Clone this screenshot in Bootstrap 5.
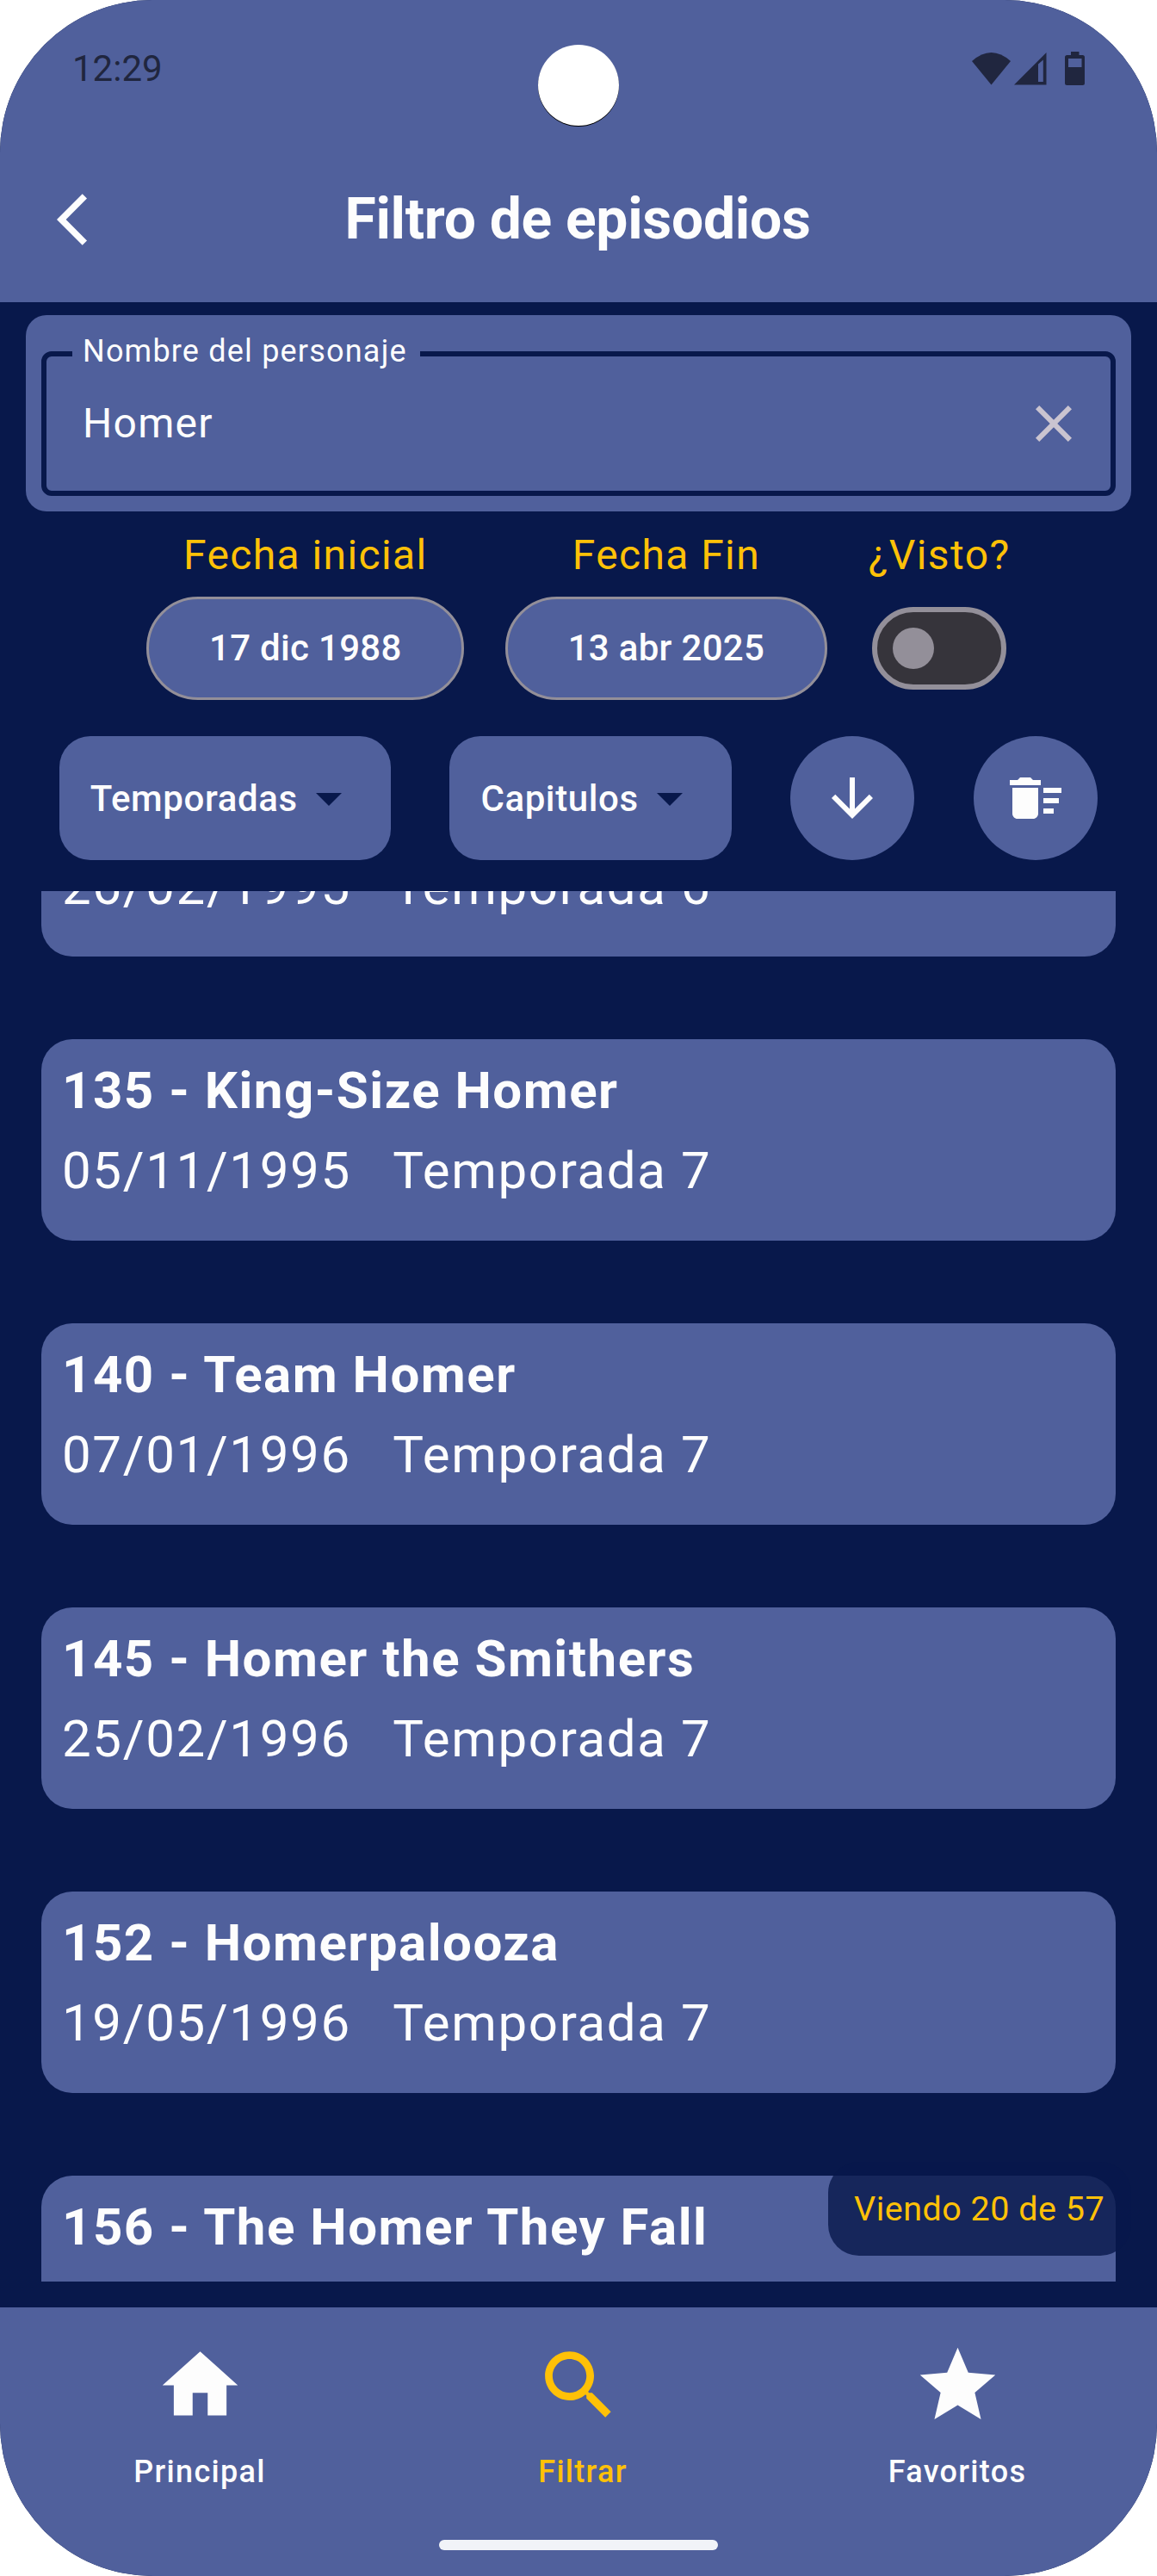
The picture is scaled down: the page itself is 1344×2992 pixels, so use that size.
<!DOCTYPE html>
<html lang="es">
<head>
<meta charset="utf-8">
<meta name="viewport" content="width=device-width, initial-scale=1">
<title>Filtro de episodios</title>
<link href="https://cdn.jsdelivr.net/npm/bootstrap@5.3.0/dist/css/bootstrap.min.css" rel="stylesheet">
<style>
:root{--panel:#50609c;--night:#08184b;--gold:#ffc107;--ink:#20263f}
body{background:#fff;font-family:Roboto,"Noto Sans",sans-serif;color:#fdfdfd}
svg{display:block;fill:currentColor;flex:none}
.phone{width:1344px;height:2992px;background:var(--night);border-radius:177px;overflow:hidden}
.top-bar{height:351px;background:var(--panel)}
.status{height:159px;padding:0 82px 0 84px;color:var(--ink);font-size:42px}
.camera{left:625px;top:52px;width:94px;height:94px;background:#fff;box-shadow:0 1px 0 #000}
.title-row{height:192px;padding:0 66px}
.title-row h1{font-size:66px;font-weight:700;line-height:78px;letter-spacing:-.3px;margin-right:74px}
.search-box{margin:15px 30px 0;height:228px;border-radius:24px;background:var(--panel);padding:18px}
.outline{height:192px;margin:0;padding:0 36px 0 44px;border:0;position:relative}
.outline::before{content:"";position:absolute;left:0;right:0;top:24px;bottom:0;border:6px solid var(--night);border-radius:12px}
.outline label{position:relative;margin-left:-8px;padding:0 15px 0 12px;background:var(--panel);font-size:36px;line-height:48px;letter-spacing:1.2px;white-space:nowrap}
.outline .value{position:relative;height:120px;font-size:48px;letter-spacing:1.3px;padding-left:4px}
.outline svg{color:#cac4d0}
.dates{gap:48px;margin-top:15px}
.dates .cap{font-size:48px;letter-spacing:1.4px;line-height:72px;margin-bottom:12px;color:var(--gold)}
.date-btn{height:120px;padding:0 69.500px;border:3px solid #938f99;border-radius:60px;background:var(--panel);color:#fdfdfd;font-size:42px;font-weight:500;letter-spacing:.3px;line-height:114px}
.toggle{width:156px;height:96px;margin-top:12px;border:6px solid #938f99;border-radius:48px;background:#36343b;padding-left:18px}
.toggle span{width:48px;height:48px;border-radius:50%;background:#938f99}
.filters{margin-top:42px}
.chip{height:144px;padding:0 36px;border-radius:36px;background:var(--panel);font-size:42px;font-weight:500;letter-spacing:.6px}
.chip svg{color:var(--night)}
.fab{width:144px;height:144px;border-radius:50%;background:var(--panel)}
.list-view{margin:36px 48px 0;height:1615px}
.list-scroll{margin-top:-158px;gap:96px}
.episode{height:234px;flex:none;border-radius:36px;background:var(--panel);padding:20px 24px;font-size:60px;line-height:105px;letter-spacing:1.65px;white-space:pre}
.episode h2{font-size:60px;font-weight:700;line-height:80px;letter-spacing:1.5px;margin:0}
.counter{left:962px;top:2511px;width:352px;height:109px;border-radius:36px;background:rgba(8,24,75,.8);color:var(--gold);font-size:39.500px;line-height:110px;padding-left:30px;letter-spacing:.5px;white-space:nowrap}
.bottom-nav{margin-top:30px;height:312px;background:var(--panel);padding:38px 12px 0}
.tab{font-size:36px;font-weight:500;letter-spacing:1.3px;line-height:48px;gap:24px;color:#fdfdfd}
.tab.active{color:var(--gold)}
.tab.active span{padding-left:10px}
.handle{left:510px;top:2950px;width:324px;height:12px;border-radius:6px;background:#f1f3f8}
</style>
</head>
<body>
<main class="phone position-relative">
  <header class="top-bar">
    <div class="status d-flex align-items-center justify-content-between">
      <span>12:29</span>
      <svg width="134" height="42" viewBox="1128 58 134 42">
        <path d="M1129 70Q1151.500 50 1174 70L1151.500 97.500Z"/>
        <path fill-rule="evenodd" d="M1178 97.500 1215.500 60V97.500ZM1206 73.500V94H1211.800V68.500Z"/>
        <path fill-rule="evenodd" d="M1244 59h9.500v4h4q2.500 0 2.500 2.500v30q0 2.500-2.500 2.500h-18q-2.500 0-2.500-2.500v-30q0-2.500 2.500-2.500h4.500zM1241 67v10h15.500V67z"/>
      </svg>
    </div>
    <div class="title-row d-flex align-items-center">
      <svg width="72" height="72" viewBox="0 0 24 24"><path d="M11.670 3.870 9.900 2.100 0 12l9.900 9.900 1.770-1.770L3.540 12z"/></svg>
      <h1 class="flex-grow-1 text-center mb-0">Filtro de episodios</h1>
    </div>
  </header>
  <div class="camera position-absolute rounded-circle"></div>

  <section class="search-box">
    <div class="outline">
      <label>Nombre del personaje</label>
      <div class="value d-flex align-items-center justify-content-between">
        <span>Homer</span>
        <svg width="72" height="72" viewBox="0 0 24 24"><path d="M19 6.410 17.590 5 12 10.590 6.410 5 5 6.410 10.590 12 5 17.590 6.410 19 12 13.410 17.590 19 19 17.590 13.410 12z"/></svg>
      </div>
    </div>
  </section>

  <section class="dates d-flex justify-content-center">
    <div class="text-center"><div class="cap">Fecha inicial</div><button class="date-btn">17 dic 1988</button></div>
    <div class="text-center"><div class="cap">Fecha Fin</div><button class="date-btn">13 abr 2025</button></div>
    <div class="d-flex flex-column align-items-center"><div class="cap">¿Visto?</div><div class="toggle d-flex align-items-center"><span></span></div></div>
  </section>

  <section class="filters d-flex justify-content-evenly">
    <div class="chip d-flex align-items-center">Temporadas<svg width="72" height="72" viewBox="0 0 24 24"><path d="m7 10 5 5 5-5z"/></svg></div>
    <div class="chip d-flex align-items-center">Capitulos<svg width="72" height="72" viewBox="0 0 24 24"><path d="m7 10 5 5 5-5z"/></svg></div>
    <div class="fab d-flex align-items-center justify-content-center"><svg width="72" height="72" viewBox="0 0 24 24"><path d="m20 12-1.410-1.410L13 16.170V4h-2v12.170l-5.580-5.590L4 12l8 8 8-8z"/></svg></div>
    <div class="fab d-flex align-items-center justify-content-center"><svg width="72" height="72" viewBox="0 0 24 24"><path d="M15 16h4v2h-4zm0-8h7v2h-7zm0 4h6v2h-6zM3 18c0 1.100.9 2 2 2h6c1.100 0 2-.9 2-2V8H3v10zM14 5h-3l-1-1H6L5 5H2v2h12z"/></svg></div>
  </section>

  <section class="list-view overflow-hidden">
    <div class="list-scroll d-flex flex-column">
      <article class="episode"><h2>&nbsp;</h2>26/02/1995   Temporada 6</article>
      <article class="episode"><h2>135 - King-Size Homer</h2>05/11/1995   Temporada 7</article>
      <article class="episode"><h2>140 - Team Homer</h2>07/01/1996   Temporada 7</article>
      <article class="episode"><h2>145 - Homer the Smithers</h2>25/02/1996   Temporada 7</article>
      <article class="episode"><h2>152 - Homerpalooza</h2>19/05/1996   Temporada 7</article>
      <article class="episode"><h2>156 - The Homer They Fall</h2></article>
    </div>
  </section>
  <div class="counter position-absolute">Viendo 20 de 57</div>

  <nav class="bottom-nav d-flex align-items-start">
    <div class="tab col d-flex flex-column align-items-center"><svg width="105" height="105" viewBox="0 0 24 24"><path d="M10 20v-6h4v6h5v-8h3L12 3 2 12h3v8z"/></svg><span>Principal</span></div>
    <div class="tab col active d-flex flex-column align-items-center"><svg width="105" height="105" viewBox="0 0 24 24"><path d="M15.500 14h-.79l-.28-.27C15.410 12.590 16 11.110 16 9.500 16 5.910 13.090 3 9.500 3S3 5.910 3 9.500 5.910 16 9.500 16c1.610 0 3.090-.59 4.230-1.570l.27.280v.79l5 4.990L20.490 19l-4.990-5zm-6 0C7.010 14 5 11.990 5 9.500S7.010 5 9.500 5 14 7.010 14 9.500 11.990 14 9.500 14z"/></svg><span>Filtrar</span></div>
    <div class="tab col d-flex flex-column align-items-center"><svg width="105" height="105" viewBox="0 0 24 24"><path d="M12 17.270 18.180 21l-1.640-7.030L22 9.240l-7.190-.61L12 2 9.190 8.630 2 9.240l5.460 4.730L5.820 21z"/></svg><span>Favoritos</span></div>
  </nav>
  <div class="handle position-absolute"></div>
</main>
<script src="https://cdn.jsdelivr.net/npm/bootstrap@5.3.0/dist/js/bootstrap.bundle.min.js"></script>
</body>
</html>
